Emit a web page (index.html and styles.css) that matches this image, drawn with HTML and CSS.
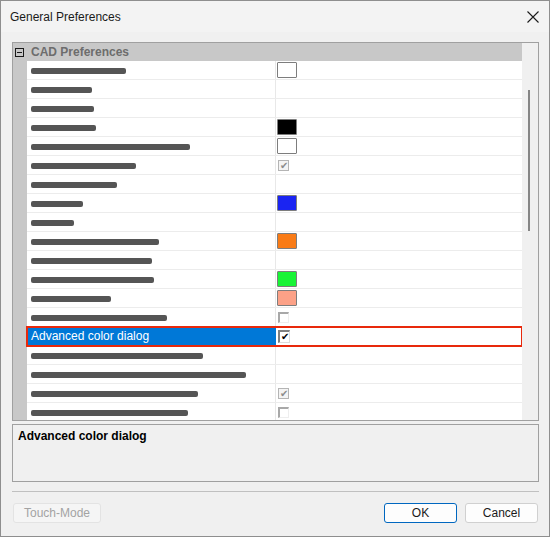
FILE: index.html
```html
<!DOCTYPE html>
<html lang="en">
<head>
  <meta charset="UTF-8">
  <title>General Preferences</title>
  <link rel="stylesheet" href="styles.css">
</head>
<body>

<div class="window">
  <div class="titlebar">
    <span class="title">General Preferences</span>
    <svg class="close" width="12" height="12" viewBox="0 0 12 12">
      <path d="M0.5 0.5 L11.5 11.5 M11.5 0.5 L0.5 11.5" stroke="#1a1a1a" stroke-width="1.1" fill="none"/>
    </svg>
  </div>

  <div class="content">
    <div class="grid">
      <div class="grid-main">
        <div class="category">
          <span class="toggle"></span>
          <span class="cat-name">CAD Preferences</span>
        </div>

        <div class="row"><div class="name"><span class="bar" style="width:95px"></span></div><div class="value"><span class="swatch white"></span></div></div>
        <div class="row"><div class="name"><span class="bar" style="width:61px"></span></div><div class="value"></div></div>
        <div class="row"><div class="name"><span class="bar" style="width:63px"></span></div><div class="value"></div></div>
        <div class="row"><div class="name"><span class="bar" style="width:65px"></span></div><div class="value"><span class="swatch black"></span></div></div>
        <div class="row"><div class="name"><span class="bar" style="width:159px"></span></div><div class="value"><span class="swatch white"></span></div></div>
        <div class="row"><div class="name"><span class="bar" style="width:105px"></span></div><div class="value"><span class="check grey">&#10004;</span></div></div>
        <div class="row"><div class="name"><span class="bar" style="width:86px"></span></div><div class="value"></div></div>
        <div class="row"><div class="name"><span class="bar" style="width:52px"></span></div><div class="value"><span class="swatch blue"></span></div></div>
        <div class="row"><div class="name"><span class="bar" style="width:43px"></span></div><div class="value"></div></div>
        <div class="row"><div class="name"><span class="bar" style="width:128px"></span></div><div class="value"><span class="swatch orange"></span></div></div>
        <div class="row"><div class="name"><span class="bar" style="width:121px"></span></div><div class="value"></div></div>
        <div class="row"><div class="name"><span class="bar" style="width:123px"></span></div><div class="value"><span class="swatch green"></span></div></div>
        <div class="row"><div class="name"><span class="bar" style="width:80px"></span></div><div class="value"><span class="swatch salmon"></span></div></div>
        <div class="row"><div class="name"><span class="bar" style="width:136px"></span></div><div class="value"><span class="check empty"></span></div></div>
        <div class="row selected"><div class="name">Advanced color dialog</div><div class="value"><span class="check on">&#10004;</span></div></div>
        <div class="row"><div class="name"><span class="bar" style="width:172px"></span></div><div class="value"></div></div>
        <div class="row"><div class="name"><span class="bar" style="width:215px"></span></div><div class="value"></div></div>
        <div class="row"><div class="name"><span class="bar" style="width:167px"></span></div><div class="value"><span class="check grey">&#10004;</span></div></div>
        <div class="row"><div class="name"><span class="bar" style="width:157px"></span></div><div class="value"><span class="check empty"></span></div></div>
      </div>
      <div class="scrollbar"><div class="thumb"></div></div>
    </div>

    <div class="description">Advanced color dialog</div>

    <div class="separator"></div>

    <div class="buttons">
      <button class="btn disabled">Touch-Mode</button>
      <div class="spacer"></div>
      <button class="btn primary">OK</button>
      <button class="btn">Cancel</button>
    </div>
  </div>
</div>

</body>
</html>
```

FILE: styles.css
```css
body {
  margin: 0;
  padding: 0;
  font-family: "Liberation Sans", Arial, sans-serif;
  font-size: 12px;
  color: #000;
  background: #f0f0f0;
}
.window {
  width: 550px;
  height: 537px;
  box-sizing: border-box;
  border: 1px solid #8e8e8e;
  background: #f0f0f0;
  display: flex;
  flex-direction: column;
}
.titlebar {
  height: 31px;
  background: #f3f3f3;
  display: flex;
  align-items: center;
  padding: 0 9px;
  flex-shrink: 0;
}
.title {
  flex: 1;
  font-size: 12px;
  color: #1a1a1a;
}
.close {
  margin-right: 1px;
}
.content {
  padding: 10px 10px 0 11px;
}
.grid {
  height: 379px;
  box-sizing: border-box;
  border: 1px solid #a0a0a0;
  display: flex;
  overflow: hidden;
}
.grid-main {
  flex: 1;
  background: #c8c8c8;
  overflow: hidden;
}
.scrollbar {
  width: 16px;
  background: #f0f0f0;
  padding-top: 47px;
  box-sizing: border-box;
}
.thumb {
  width: 2px;
  height: 141px;
  margin-left: 6px;
  background: #858585;
}
.category {
  height: 18px;
  display: flex;
  align-items: center;
  background: #c8c8c8;
}
.toggle {
  width: 7px;
  height: 7px;
  border: 1px solid #1a1a1a;
  margin: 0 7px 0 2px;
  position: relative;
}
.toggle::after {
  content: "";
  position: absolute;
  left: 1px;
  top: 3px;
  width: 5px;
  height: 1px;
  background: #1a1a1a;
}
.cat-name {
  font-weight: bold;
  color: #6d6d6d;
  font-size: 12px;
}
.row {
  margin-left: 14px;
  height: 19px;
  box-sizing: border-box;
  border-bottom: 1px solid #ececec;
  background: #fff;
  display: flex;
}
.name {
  width: 249px;
  box-sizing: border-box;
  border-right: 1px solid #e8e8e8;
  padding-left: 4px;
  display: flex;
  align-items: center;
}
.value {
  flex: 1;
  display: flex;
  align-items: center;
  padding-left: 1px;
}
.bar {
  display: block;
  height: 6px;
  border-radius: 2px;
  background: #555;
  filter: blur(0.7px);
  margin-top: 1px;
}
.swatch {
  width: 18px;
  height: 14px;
  border: 1px solid #7d7d7d;
  border-radius: 1px;
  filter: blur(0.3px);
}
.swatch.white { background: #fff; }
.swatch.black { background: #000; }
.swatch.blue { background: #1a24f2; }
.swatch.orange { background: #f97b16; }
.swatch.green { background: #18f436; }
.swatch.salmon { background: #fca187; }
.check {
  width: 11px;
  height: 11px;
  margin-left: 1px;
  box-sizing: border-box;
  font-size: 10px;
  line-height: 10px;
  text-align: center;
}
.check.grey {
  border: 1px solid #b4b4b4;
  color: #8c8c8c;
  background: #f4f4f4;
}
.check.empty {
  border-top: 2px solid #a8a8a8;
  border-left: 2px solid #a8a8a8;
  border-right: 1px solid #eeeeee;
  border-bottom: 1px solid #eeeeee;
}
.check.on {
  width: 12px;
  height: 13px;
  border-top: 2px solid #808080;
  border-left: 2px solid #808080;
  border-right: 1px solid #dcdcdc;
  border-bottom: 1px solid #dcdcdc;
  color: #000;
  font-size: 10px;
  line-height: 10px;
}
.row.selected {
  outline: 2px solid #e8290c;
  outline-offset: -1px;
  position: relative;
}
.row.selected .name {
  background: #0078d7;
  color: #fff;
  font-size: 12px;
  border-right: none;
}
.description {
  margin-top: 3px;
  height: 58px;
  box-sizing: border-box;
  border: 1px solid #a0a0a0;
  padding: 4px 5px;
  font-weight: bold;
  font-size: 12px;
}
.separator {
  margin-top: 9px;
  height: 1px;
  background: #c0c0c0;
}
.buttons {
  margin-top: 11px;
  margin-right: 1px;
  display: flex;
  gap: 8px;
}
.spacer {
  flex: 1;
}
.btn {
  font-family: "Liberation Sans", Arial, sans-serif;
  font-size: 12px;
  height: 20px;
  width: 73px;
  box-sizing: border-box;
  border: 1px solid #d0d0d0;
  border-radius: 3px;
  background: #fdfdfd;
  color: #1a1a1a;
  padding: 0;
}
.btn.primary {
  border-color: #0067c0;
}
.btn.disabled {
  width: 88px;
  margin-left: 1px;
  background: #f5f5f5;
  border-color: #e3e3e3;
  color: #a3a3a3;
}
```
